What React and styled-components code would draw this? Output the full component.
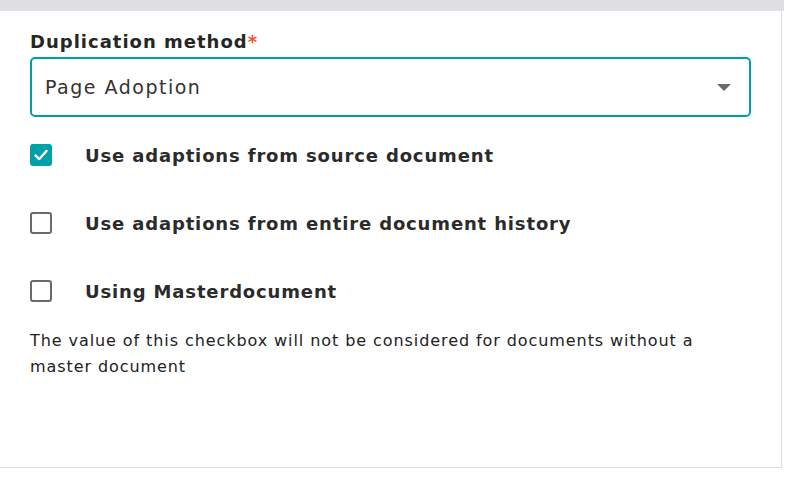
import React, { useState } from "react";
import styled, { createGlobalStyle } from "styled-components";

const GlobalStyle = createGlobalStyle`
  html, body {
    margin: 0;
    padding: 0;
    background: #ffffff;
  }
  body {
    font-family: "DejaVu Sans", "Open Sans", sans-serif;
    color: #2b2b2b;
  }
`;

const Page = styled.div`
  width: 789px;
  height: 481px;
  display: flex;
  flex-direction: column;
  background: #ffffff;
`;

const TopBar = styled.div`
  width: 784px;
  height: 11px;
  background: #dedfe3;
  flex-shrink: 0;
`;

const Panel = styled.div`
  width: 782px;
  height: 457px;
  box-sizing: border-box;
  border-right: 1px solid #dcdde1;
  border-bottom: 1px solid #dcdde1;
  padding: 18px 0 0 30px;
  display: flex;
  flex-direction: column;
`;

const Label = styled.div`
  font-size: 18px;
  font-weight: 700;
  color: #262626;
  line-height: 26px;
  letter-spacing: 1px;
`;

const Required = styled.span`
  color: #f4511e;
`;

const SelectBox = styled.div`
  margin-top: 2px;
  width: 721px;
  height: 60px;
  box-sizing: border-box;
  border: 2px solid #00a0a8;
  border-radius: 5px;
  display: flex;
  align-items: center;
  justify-content: space-between;
  padding: 0 18px 0 13px;
  font-size: 19px;
  letter-spacing: 1.5px;
  color: #333333;
`;

const Caret = styled.span`
  width: 0;
  height: 0;
  border-left: 7px solid transparent;
  border-right: 7px solid transparent;
  border-top: 7px solid #6b6b6b;
`;

const Options = styled.div`
  margin-top: 27px;
  display: flex;
  flex-direction: column;
  gap: 46px;
`;

const Row = styled.label`
  display: flex;
  align-items: center;
  height: 22px;
  cursor: pointer;
`;

const Box = styled.span`
  width: 22px;
  height: 22px;
  box-sizing: border-box;
  border-radius: 3px;
  border: ${(p) => (p.$checked ? "none" : "2px solid #6a6a6a")};
  background: ${(p) => (p.$checked ? "#00a0a8" : "#ffffff")};
  display: flex;
  align-items: center;
  justify-content: center;
  margin-right: 33px;
  flex-shrink: 0;
`;

const OptionText = styled.span`
  font-size: 18px;
  font-weight: 700;
  letter-spacing: 0.85px;
  color: #2b2b2b;
`;

const Help = styled.p`
  margin: 26px 0 0;
  width: 690px;
  font-size: 16px;
  line-height: 26px;
  letter-spacing: 0.92px;
  color: #222222;
`;

const Check = () => (
  <svg width="16" height="16" viewBox="0 0 16 16" fill="none">
    <path d="M2.5 8.5 L6.3 12 L13.5 4" stroke="#ffffff" strokeWidth="2.4" strokeLinecap="round" strokeLinejoin="round" />
  </svg>
);

const options = [
  "Use adaptions from source document",
  "Use adaptions from entire document history",
  "Using Masterdocument",
];

export default function App() {
  const [checked, setChecked] = useState([true, false, false]);
  const toggle = (i) => setChecked((c) => c.map((v, j) => (j === i ? !v : v)));

  return (
    <>
      <GlobalStyle />
      <Page>
        <TopBar />
        <Panel>
          <Label>
            Duplication method<Required>*</Required>
          </Label>
          <SelectBox>
            <span>Page Adoption</span>
            <Caret />
          </SelectBox>
          <Options>
            {options.map((text, i) => (
              <Row key={text} onClick={() => toggle(i)}>
                <Box $checked={checked[i]}>{checked[i] && <Check />}</Box>
                <OptionText>{text}</OptionText>
              </Row>
            ))}
          </Options>
          <Help>
            The value of this checkbox will not be considered for documents without a master document
          </Help>
        </Panel>
      </Page>
    </>
  );
}
